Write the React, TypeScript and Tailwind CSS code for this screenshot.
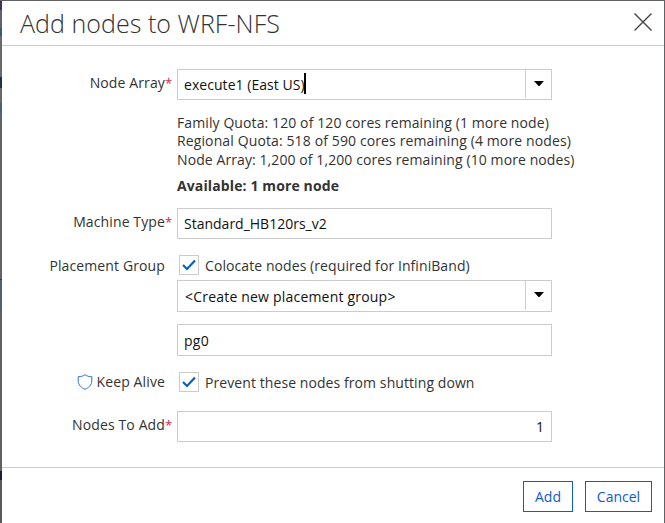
import type { ReactNode } from "react";

function Row({ label, className, labelClass, required, children }: {
  label?: ReactNode;
  className: string;
  labelClass?: string;
  required?: boolean;
  children: ReactNode;
}) {
  return (
    <div className={`flex items-start ${className}`}>
      <div className="flex w-[175px] shrink-0 justify-end whitespace-nowrap pr-[5px]">
        <span className={`flex tracking-[0.12px] ${labelClass ?? ""}`}>{label}</span>
        <span className="w-[7px] pt-[4px] text-[13px] text-[#e0204f]">{required ? "*" : ""}</span>
      </div>
      {children}
    </div>
  );
}

function Dropdown({ children, className }: { children: ReactNode; className: string }) {
  return (
    <div className={`flex w-[375px] border border-[#cccccc] text-[#111111] ${className}`}>
      <div className="flex flex-1 items-start pt-[5px]">{children}</div>
      <div className="mb-px flex w-[26px] justify-center border-l border-[#cccccc] pt-[11px]">
        <svg width="10" height="5" viewBox="0 0 10 5"><path d="M0 0h10L5 5.500z" fill="#000" /></svg>
      </div>
    </div>
  );
}

function Check() {
  return (
    <span className="ml-[2px] flex h-[20px] w-[20px] shrink-0 items-center justify-center border border-[#cccccc]">
      <svg width="14" height="12" viewBox="0 0 14 12" fill="none" stroke="#0f5fb8" strokeWidth="2.200">
        <path d="M1 6l4 4 8-8.500" />
      </svg>
    </span>
  );
}

/* Dimmed page visible beside the dialog's left edge. */
function Backdrop() {
  return (
    <div className="flex w-[2px] shrink-0 flex-col">
      <div className="h-[9px] bg-[#453252]" />
      <div className="h-[18px] bg-[#626366]" />
      <div className="h-[8px] bg-[#3d5873]" />
      <div className="h-[41px] bg-[#68696a]" />
      <div className="h-[11px] bg-[#1c2f52]" />
      <div className="h-[15px] bg-[#68696a]" />
      <div className="h-[10px] bg-[#48627a]" />
      <div className="h-[166px] bg-[#626365]" />
      <div className="h-px bg-[#3b3c3e]" />
      <div className="h-[30px] bg-[#50606f]" />
      <div className="h-[161px] bg-[#606163]" />
      <div className="h-[9px] bg-[#241a2c]" />
      <div className="flex-1 bg-[#59595b]" />
    </div>
  );
}

export default function App() {
  return (
    <div className="flex h-[523px] w-[665px] overflow-hidden bg-[#606163] pr-px pt-px font-['Open_Sans','Noto_Sans',sans-serif] text-[14px] leading-[20px] text-[#333333]">
      <Backdrop />
      <div className="flex h-[522px] flex-1 flex-col bg-white">
        <header className="flex h-[45px] justify-between border-b border-[#cccccc] pl-[18px] pr-[12px]">
          <h1 className="whitespace-nowrap pt-[4px] text-[25px] font-light leading-[36px] tracking-[0.05px] text-[#333333]">
            <span>Add nodes to WRF-NFS</span>
          </h1>
          <svg className="mt-[12px]" width="18" height="18" viewBox="0 0 18 18" fill="none" stroke="#444" strokeWidth="1.400">
            <path d="M.5.5l17 17M17.500.500l-17 17" />
          </svg>
        </header>
        <main className="flex h-[421px] flex-col pt-[23px]">
          <Row className="h-[44px]" label="Node Array" labelClass="pt-[4px]" required>
            <Dropdown className="h-[31px]">
              <span className="pl-[6px] tracking-[0.05px]">execute1 (East US)</span>
              <span className="-ml-px -mt-[2px] h-[21px] w-[2px] bg-black" />
            </Dropdown>
          </Row>
          <Row className="h-[95px]">
            <div className="whitespace-nowrap">
              <div className="h-[18px] tracking-[0.1px]"><span>Family Quota: 120 of 120 cores remaining (1 more node)</span></div>
              <div className="h-[19px] tracking-[0.12px]"><span>Regional Quota: 518 of 590 cores remaining (4 more nodes)</span></div>
              <div className="h-[26px] tracking-[0.09px]"><span>Node Array: 1,200 of 1,200 cores remaining (10 more nodes)</span></div>
              <div className="font-bold tracking-[0.12px]"><span>Available: 1 more node</span></div>
            </div>
          </Row>
          <Row className="h-[47px]" label="Machine Type" labelClass="pt-[4px]" required>
            <div className="h-[31px] w-[375px] border border-[#cccccc] pl-[6px] pt-[5px] text-[#111111]"><span>Standard_HB120rs_v2</span></div>
          </Row>
          <Row className="h-[25px]" label="Placement Group" labelClass="pt-px">
            <Check /><span className="pl-[6px] pt-px tracking-[0.08px]">Colocate nodes (required for InfiniBand)</span>
          </Row>
          <Row className="h-[44px]">
            <Dropdown className="h-[32px]"><span className="pl-[7px] pt-px tracking-[0.2px]">&lt;Create new placement group&gt;</span></Dropdown>
          </Row>
          <Row className="h-[48px]">
            <div className="h-[32px] w-[375px] border border-[#cccccc] pl-[6px] pt-[6px] tracking-[0.3px] text-[#111111]"><span>pg0</span></div>
          </Row>
          <Row className="h-[39px]" label={<>
            <svg className="mr-[4px] mt-[2px]" width="16" height="16" viewBox="0 0 16 16" fill="none" stroke="#2f73d0">
              <path d="M8 .7C6.400 2 4 2.700 1.200 2.700V7c0 4.200 3.300 6.700 6.800 8.300 3.500-1.600 6.800-4.100 6.800-8.300V2.700C12 2.700 9.600 2 8 .7z" />
            </svg><span>Keep Alive</span></>}>
            <Check /><span className="pl-[6px] pt-px tracking-[0.08px]">Prevent these nodes from shutting down</span>
          </Row>
          <Row className="h-[31px]" label="Nodes To Add" labelClass="pt-[4px]" required>
            <div className="h-[31px] w-[375px] border border-[#cccccc] pr-[7px] pt-[5px] text-right text-[#111111]">1</div>
          </Row>
        </main>
        <footer className="flex flex-1 justify-end gap-[12px] border-t border-[#cccccc] pr-[12px] pt-[13px] text-[#0c5bd0]">
          <button className="h-[31px] w-[50px] border border-[#0c5bd0]">Add</button>
          <button className="h-[31px] w-[67px] border border-[#0c5bd0]">Cancel</button>
        </footer>
      </div>
    </div>
  );
}
